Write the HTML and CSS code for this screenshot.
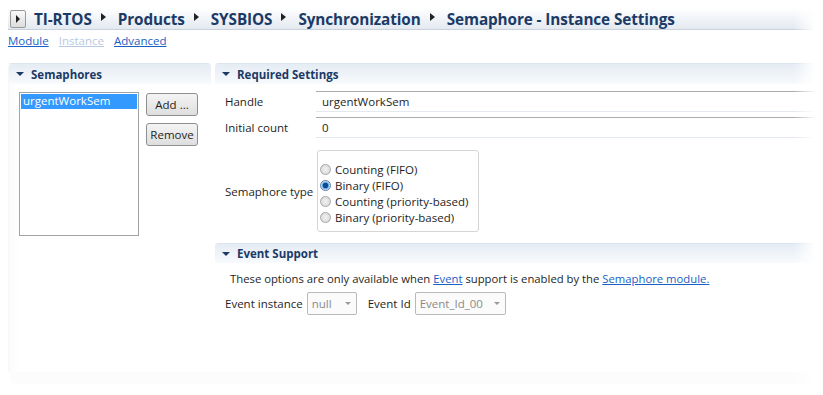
FILE: index.html
```html
<!DOCTYPE html>
<html>
<head>
<meta charset="utf-8">
<link rel="stylesheet" href="styles.css">
</head>
<body>
<div class="page">
  <div class="crumbbar">
    <span class="navbtn"><svg width="6" height="8" viewBox="0 0 6 8"><path d="M1 0 L5 4 L1 8 Z" fill="#222"/></svg></span>
    <span class="crumb">TI-RTOS</span><span class="sep"></span>
    <span class="crumb">Products</span><span class="sep"></span>
    <span class="crumb">SYSBIOS</span><span class="sep"></span>
    <span class="crumb">Synchronization</span><span class="sep"></span>
    <span class="crumb">Semaphore - Instance Settings</span>
  </div>
  <div class="tabs">
    <a class="link">Module</a>
    <span class="disabled">Instance</span>
    <a class="link">Advanced</a>
  </div>
  <div class="main">
    <div class="panel left">
      <div class="sechead"><span class="tri"></span>Semaphores</div>
      <div class="leftbody">
        <div class="listbox">
          <div class="item sel">urgentWorkSem</div>
        </div>
        <div class="btns">
          <button class="btn">Add ...</button>
          <button class="btn">Remove</button>
        </div>
      </div>
    </div>
    <div class="panel right">
      <div class="sechead"><span class="tri"></span>Required Settings</div>
      <div class="form">
        <div class="row">
          <label class="lbl">Handle</label>
          <div class="field">urgentWorkSem</div>
        </div>
        <div class="row">
          <label class="lbl">Initial count</label>
          <div class="field">0</div>
        </div>
        <div class="row radiorow">
          <label class="lbl">Semaphore type</label>
          <div class="radiogroup">
            <div class="radio"><span class="rb"></span>Counting (FIFO)</div>
            <div class="radio"><span class="rb on"></span>Binary (FIFO)</div>
            <div class="radio"><span class="rb"></span>Counting (priority-based)</div>
            <div class="radio"><span class="rb"></span>Binary (priority-based)</div>
          </div>
        </div>
      </div>
      <div class="sechead ev"><span class="tri"></span>Event Support</div>
      <div class="evbody">
        <div class="note">These options are only available when <a class="link">Event</a> support is enabled by the <a class="link">Semaphore module.</a></div>
        <div class="evrow">
          <span class="lbl2">Event instance</span>
          <span class="combo c1">null<span class="dd"></span></span>
          <span class="lbl2 evid">Event Id</span>
          <span class="combo c2">Event_Id_00<span class="dd"></span></span>
        </div>
      </div>
    </div>
  </div>
  <div class="shadowband"></div>
  <div class="fade"></div>
</div>
</body>
</html>
```

FILE: styles.css
```css
* { box-sizing: border-box; }
html, body { margin: 0; padding: 0; background: #fff; }
body {
  font-family: "Open Sans", "Noto Sans", sans-serif;
  font-size: 11.3px;
  color: #1e1e1e;
  width: 823px;
  height: 395px;
  overflow: hidden;
}
.page { position: relative; width: 823px; height: 395px; }

.crumbbar {
  margin: 8px 0 0 8px;
  height: 22px;
  display: flex;
  align-items: center;
  background: linear-gradient(#ffffff, #eef2f7 60%, #e4e9f0);
  border-bottom: 1px solid #c9d1dc;
  color: #1b3a66;
  font-family: "Open Sans", sans-serif;
  font-weight: 700;
  font-size: 15.3px;
  letter-spacing: -0.1px;
}
.navbtn {
  width: 16px; height: 18px;
  margin-left: 2px; margin-right: 8px;
  border: 1px solid #9a9a9a;
  border-radius: 2px;
  background: linear-gradient(#fafafa, #dcdcdc);
  display: flex; align-items: center; justify-content: center;
}
.sep {
  width: 0; height: 0;
  border-top: 4px solid transparent;
  border-bottom: 4px solid transparent;
  border-left: 5px solid #222;
  margin: 0 12px 3px 9px;
}

.tabs {
  height: 20px;
  margin-left: 8px;
  display: flex;
  gap: 10px;
  align-items: center;
  font-size: 11.5px;
}
.link { color: #1a5fc4; text-decoration: underline; cursor: pointer; }
.disabled { color: #b7c8e2; text-decoration: underline; }

.main {
  display: flex;
  gap: 4px;
  margin-top: 13px;
  margin-left: 8px;
  height: 309px;
}
.panel {
  border-top: 1px solid #dbe4ef;
  border-radius: 4px 4px 0 0;
  background: #fff;
}
.left {
  width: 203px;
  border-left: 1px solid #f6f7f9;
  background: linear-gradient(90deg, #fbfbfb, #fff 10px);
}
.right { flex: 1; }
.shadowband {
  height: 12px;
  margin: 0 12px 0 10px;
  background: #fcfcfc;
  border-radius: 0 0 6px 6px;
}

.sechead {
  height: 20px;
  display: flex;
  align-items: center;
  padding-left: 6px;
  background: linear-gradient(#e5ecf4, #f8fafc);
  color: #1b3a66;
  font-weight: 700;
  font-size: 11.5px;
  border-radius: 4px 4px 0 0;
}
.tri {
  width: 0; height: 0;
  border-left: 4px solid transparent;
  border-right: 4px solid transparent;
  border-top: 4px solid #1b3a66;
  margin-right: 7px;
  margin-left: 1px;
}

.leftbody {
  display: flex;
  padding: 8px 0 0 10px;
  gap: 7px;
}
.listbox {
  width: 120px;
  height: 144px;
  border: 1px solid #9ea3a8;
  background: #fff;
  padding: 1px;
}
.item { height: 15px; line-height: 14px; padding-left: 2px; font-size: 11.5px; }
.sel { background: #3399ff; color: #fff; }
.btns { display: flex; flex-direction: column; gap: 7px; padding-top: 1px; }
.btn {
  width: 52px; height: 23px;
  border: 1px solid #8e8f8f;
  border-radius: 3px;
  background: linear-gradient(#f4f4f4, #dedede);
  font-family: inherit;
  font-size: 11.5px;
  color: #1e1e1e;
  padding: 0;
}

.form { padding: 7px 0 0 10px; }
.row { display: flex; align-items: center; }
.row + .row { margin-top: 5px; }
.lbl { width: 91px; font-size: 11.5px; }
.field {
  flex: 1;
  height: 21px;
  border-top: 1px solid #ababab;
  border-bottom: 1px solid #e3e9ef;
  padding-left: 6px;
  line-height: 19px;
  font-size: 11.5px;
}
.radiorow { margin-top: 12px !important; }
.radiogroup {
  width: 162px;
  height: 82px;
  border: 1px solid #d5d5d5;
  border-radius: 3px;
  padding: 10px 0 0 2px;
  margin-left: 1px;
}
.radio { display: flex; align-items: center; height: 16px; font-size: 11.5px; }
.rb {
  width: 11px; height: 11px;
  border-radius: 50%;
  border: 1px solid #a6a6a6;
  background: radial-gradient(#f2f2f2, #d4d4d4);
  margin-right: 4px;
}
.rb.on { background: radial-gradient(circle, #0d4a92 0 2.5px, #58a3e6 3px, #dfeaf5 4.5px); border-color: #5d7fa5; }

.sechead.ev {
  margin-top: 11px;
  border-top: 1px solid #dbe4ef;
}
.evbody { padding: 8px 0 0 15px; }
.note { font-size: 11.3px; }
.evrow { display: flex; align-items: center; margin-top: 6px; margin-left: -5px; }
.lbl2 { font-size: 11.5px; margin-right: 4px; }
.evid { margin-left: 11px; }
.combo {
  height: 23px;
  border: 1px solid #b9b9b9;
  border-radius: 2px;
  color: #8a8a8a;
  display: flex; align-items: center;
  padding-left: 4px;
  font-size: 11.5px;
  justify-content: space-between;
  padding-right: 5px;
  background: #fbfbfb;
}
.c1 { width: 50px; }
.c2 { width: 91px; }
.dd {
  width: 0; height: 0;
  border-left: 3px solid transparent;
  border-right: 3px solid transparent;
  border-top: 3px solid #9a9a9a;
}

.fade {
  position: absolute;
  top: 0; right: 0;
  width: 30px; height: 395px;
  background: linear-gradient(90deg, rgba(255,255,255,0), #fff 75%);
}
```
